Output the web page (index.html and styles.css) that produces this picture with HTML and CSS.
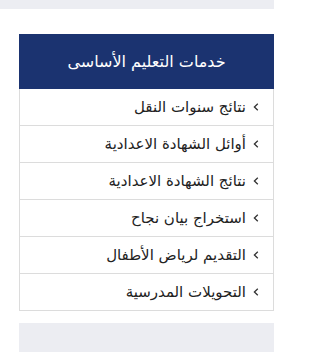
FILE: index.html
```html
<!DOCTYPE html>
<html lang="ar">
<head>
<meta charset="utf-8">
<link rel="stylesheet" href="styles.css">
</head>
<body>
<div class="page">
  <div class="top-box"></div>
  <div class="card">
    <div class="card-head">خدمات التعليم الأساسى</div>
    <ul class="links">
      <li><svg class="chev" width="6" height="8" viewBox="0 0 6 8"><path d="M4.8 0.8 L1.4 4 L4.8 7.2" fill="none" stroke="#333" stroke-width="1.3"/></svg><span>نتائج سنوات النقل</span></li>
      <li><svg class="chev" width="6" height="8" viewBox="0 0 6 8"><path d="M4.8 0.8 L1.4 4 L4.8 7.2" fill="none" stroke="#333" stroke-width="1.3"/></svg><span>أوائل الشهادة الاعدادية</span></li>
      <li><svg class="chev" width="6" height="8" viewBox="0 0 6 8"><path d="M4.8 0.8 L1.4 4 L4.8 7.2" fill="none" stroke="#333" stroke-width="1.3"/></svg><span>نتائج الشهادة الاعدادية</span></li>
      <li><svg class="chev" width="6" height="8" viewBox="0 0 6 8"><path d="M4.8 0.8 L1.4 4 L4.8 7.2" fill="none" stroke="#333" stroke-width="1.3"/></svg><span>استخراج بيان نجاح</span></li>
      <li><svg class="chev" width="6" height="8" viewBox="0 0 6 8"><path d="M4.8 0.8 L1.4 4 L4.8 7.2" fill="none" stroke="#333" stroke-width="1.3"/></svg><span>التقديم لرياض الأطفال</span></li>
      <li><svg class="chev" width="6" height="8" viewBox="0 0 6 8"><path d="M4.8 0.8 L1.4 4 L4.8 7.2" fill="none" stroke="#333" stroke-width="1.3"/></svg><span>التحويلات المدرسية</span></li>
    </ul>
  </div>
  <div class="bottom-box"></div>
</div>
</body>
</html>
```

FILE: styles.css
```css
html, body {
  margin: 0;
  padding: 0;
  background: #ffffff;
}
body {
  font-family: "DejaVu Sans", sans-serif;
  width: 290px;
  height: 352px;
  overflow: hidden;
}
.page {
  width: 274px;
}
.top-box {
  height: 9px;
  background: #ecedf2;
}
.card {
  margin: 25px 0 0 19px;
  width: 255px;
}
.card-head {
  direction: rtl;
  height: 55px;
  background: #1b3370;
  color: #ffffff;
  font-size: 16px;
  display: flex;
  align-items: center;
  justify-content: center;
}
.links {
  direction: rtl;
  list-style: none;
  margin: 0;
  padding: 0;
  border: 1px solid #dcdcdc;
  border-top: none;
}
.links li {
  height: 37px;
  box-sizing: border-box;
  border-top: 1px solid #dcdcdc;
  display: flex;
  align-items: center;
  gap: 7px;
  padding-right: 14px;
  font-size: 15px;
  color: #222222;
}
.links li:first-child { border-top: none; height: 36px; }
.chev {
  flex: none;
}
.bottom-box {
  margin: 12px 0 0 19px;
  width: 255px;
  height: 40px;
  background: #ecedf2;
}
```
